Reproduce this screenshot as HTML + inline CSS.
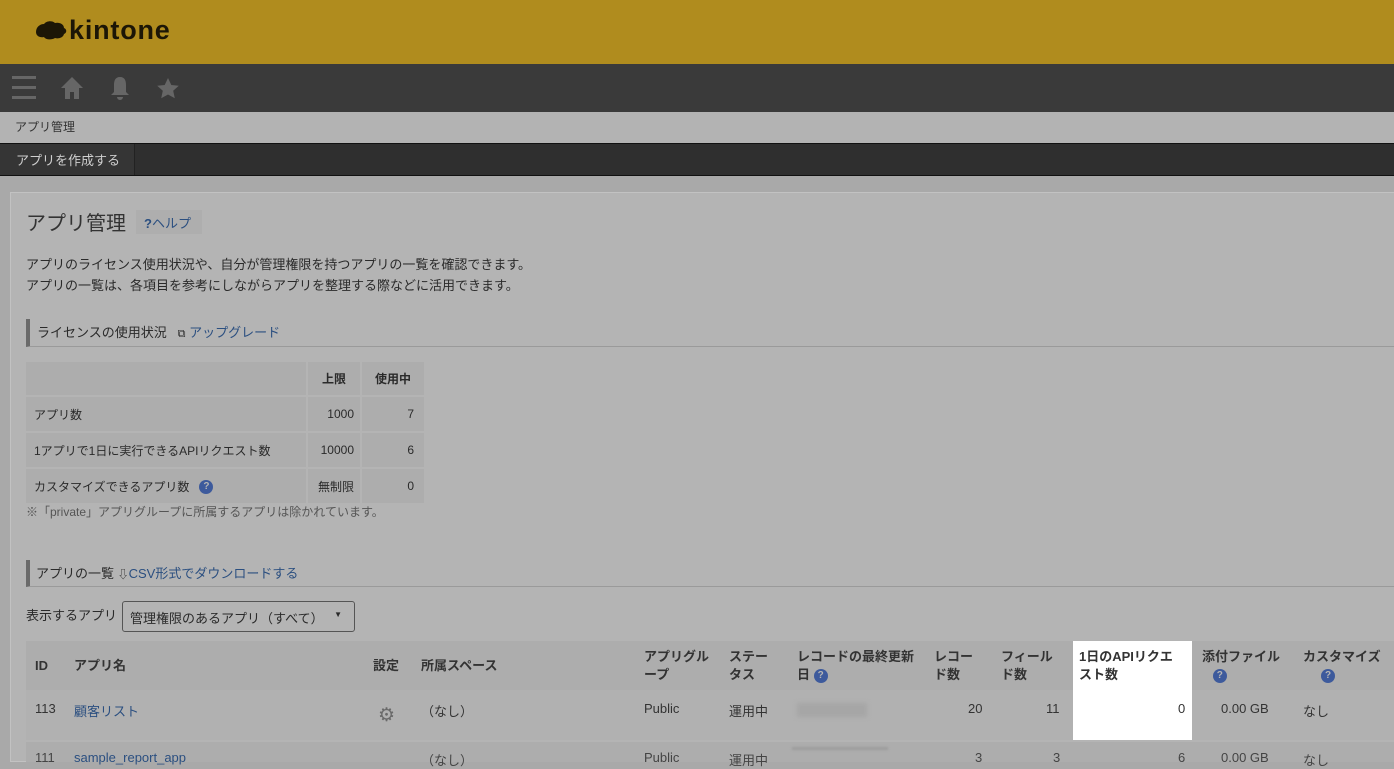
<!DOCTYPE html><html><head><meta charset="utf-8"><style>
*{box-sizing:border-box;margin:0;padding:0}
body{width:1394px;height:758px;overflow:hidden;background:#a9a9a9;font-family:"Liberation Sans","Noto Sans CJK JP",sans-serif;color:#2a2a2a;font-size:13px;position:relative}
.a{position:absolute;white-space:nowrap}
.link{color:#2b4f80}
td,th{font-size:13px}
.q{display:inline-block;width:14px;height:14px;border-radius:50%;background:#3d5a9c;color:#b5b5b5;font-size:10px;font-weight:bold;text-align:center;line-height:14px;vertical-align:middle}
.w{white-space:normal}
</style></head><body>
<div class="a" style="left:0;top:0;width:1394px;height:64px;background:#b08c1e"></div>
<svg class="a" style="left:34px;top:19px" width="34" height="26" viewBox="0 0 34 24"><path d="M2 12c0-5 4-8 8-8 2-3 8-4 11-1 4-1 9 1 9 5 3 1 3 5 0 6-1 4-6 5-9 4-3 2-9 2-11-1-4 1-8-1-8-5z" fill="#1c1606"/></svg>
<div class="a" style="left:69px;top:15px;font-size:27px;font-weight:bold;color:#1c1606;letter-spacing:.8px">kintone</div>
<div class="a" style="left:0;top:64px;width:1394px;height:48px;background:#3a3a3a"></div>
<div class="a" style="left:12px;top:76px;width:24px;height:3px;background:#666;box-shadow:0 10px 0 #666,0 20px 0 #666"></div>
<svg class="a" style="left:60px;top:76px" width="24" height="24"><path d="M12 1L1 12h4v11h5v-7h4v7h5V12h4z" fill="#666"/></svg>
<svg class="a" style="left:109px;top:75px" width="22" height="26"><path d="M11 2c-5 0-6 4-6 8v7l-3 3h18l-3-3v-7c0-4-1-8-6-8zM8 22a3 3 0 006 0z" fill="#666"/></svg>
<svg class="a" style="left:156px;top:77px" width="24" height="23"><path d="M12 1l3.3 7 7.5.8-5.6 5 1.6 7.5L12 17.5 5.2 21.3l1.6-7.5-5.6-5 7.5-.8z" fill="#666"/></svg>
<div class="a" style="left:0;top:112px;width:1394px;height:31px;background:#b3b3b3"></div>
<div class="a" style="left:15px;top:118px;font-size:12px;color:#333">アプリ管理</div>
<div class="a" style="left:0;top:143px;width:1394px;height:33px;background:#2f2f2f;border-top:1px solid #111;border-bottom:1px solid #111"></div>
<div class="a" style="left:0;top:144px;width:135px;height:31px;border-right:1px solid #222;background:#353535;color:#cfcfcf;font-size:13px;padding:6px 0 0 16px">アプリを作成する</div>
<div class="a" style="left:10px;top:192px;width:1390px;height:570px;background:#b4b4b4;border:1px solid #c2c2c2;border-right:none"></div>
<div class="a" style="left:26px;top:207px;font-size:20px;color:#333">アプリ管理</div>
<div class="a" style="left:136px;top:210px;width:66px;height:24px;background:#aeaeae;color:#2b4f80;font-size:13px;padding:3px 0 0 8px"><b>?</b>ヘルプ</div>
<div class="a" style="left:26px;top:254px;line-height:21px;color:#2a2a2a">アプリのライセンス使用状況や、自分が管理権限を持つアプリの一覧を確認できます。<br>アプリの一覧は、各項目を参考にしながらアプリを整理する際などに活用できます。</div>
<div class="a" style="left:26px;top:319px;width:1368px;height:28px;border-left:4px solid #6a6a6a;border-bottom:1px solid #9a9a9a;padding:3px 0 0 7px">ライセンスの使用状況 &nbsp;&nbsp;<span style="font-size:11px">⧉</span> <span class="link">アップグレード</span></div>
<table class="a" style="left:26px;top:362px;border-collapse:separate;border-spacing:2px;margin:-2px">
<tr style="height:33px"><td style="width:280px;background:#adadad"></td><td style="width:52px;background:#adadad;font-weight:bold;font-size:12px;text-align:center">上限</td><td style="width:62px;background:#adadad;font-weight:bold;font-size:12px;text-align:center">使用中</td></tr>
<tr style="height:34px"><td style="background:#adadad;padding-left:8px;font-size:12px">アプリ数</td><td style="background:#adadad;text-align:right;padding-right:6px;font-size:12px">1000</td><td style="background:#adadad;text-align:right;padding-right:10px;font-size:12px">7</td></tr>
<tr style="height:34px"><td style="background:#adadad;padding-left:8px;font-size:12px">1アプリで1日に実行できるAPIリクエスト数</td><td style="background:#adadad;text-align:right;padding-right:6px;font-size:12px">10000</td><td style="background:#adadad;text-align:right;padding-right:10px;font-size:12px">6</td></tr>
<tr style="height:34px"><td style="background:#adadad;padding-left:8px;font-size:12px">カスタマイズできるアプリ数 &nbsp;&nbsp;<span class="q">?</span></td><td style="background:#adadad;text-align:right;padding-right:6px;font-size:12px">無制限</td><td style="background:#adadad;text-align:right;padding-right:10px;font-size:12px">0</td></tr>
</table>
<div class="a" style="left:26px;top:503px;font-size:12px;color:#555">※「private」アプリグループに所属するアプリは除かれています。</div>
<div class="a" style="left:26px;top:560px;width:1368px;height:27px;border-left:4px solid #6a6a6a;border-bottom:1px solid #9a9a9a;padding:3px 0 0 6px">アプリの一覧 <span style="font-size:11px">⇩</span><span class="link">CSV形式でダウンロードする</span></div>
<div class="a" style="left:26px;top:605px">表示するアプリ</div>
<div class="a" style="left:122px;top:601px;width:233px;height:31px;border:1px solid #555;border-radius:3px;padding:6px 0 0 7px">管理権限のあるアプリ（すべて） <span style="position:absolute;right:12px;top:8px;font-size:8px">▼</span></div>
<div class="a" style="left:26px;top:641px;width:1368px;height:49px;background:#adadad"></div>
<div class="a" style="left:26px;top:690px;width:1368px;height:50px;background:#b1b1b1"></div>
<div class="a" style="left:26px;top:742px;width:1368px;height:20px;background:#adadad"></div>
<div class="a" style="left:1073px;top:641px;width:119px;height:99px;background:#fff"></div>
<div class="a" style="top:648px;left:0;font-size:13px;line-height:18px;font-weight:bold;color:#333">
<span class="a" style="left:35px;top:9px">ID</span>
<span class="a" style="left:74px;top:9px">アプリ名</span>
<span class="a" style="left:373px;top:9px">設定</span>
<span class="a" style="left:421px;top:9px">所属スペース</span>
<span class="a w" style="left:644px;top:0;width:72px">アプリグループ</span>
<span class="a w" style="left:729px;top:0;width:46px">ステータス</span>
<span class="a w" style="left:797px;top:0;width:124px">レコードの最終更新日 <span class="q">?</span></span>
<span class="a w" style="left:934px;top:0;width:46px">レコード数</span>
<span class="a w" style="left:1001px;top:0;width:60px">フィールド数</span>
<span class="a w" style="left:1079px;top:0;width:106px">1日のAPIリクエスト数</span>
<span class="a" style="left:1202px;top:0">添付ファイル<br>&nbsp;&nbsp;&nbsp;<span class="q">?</span></span>
<span class="a" style="left:1303px;top:0">カスタマイズ<br>&nbsp;&nbsp;&nbsp;&nbsp;&nbsp;<span class="q">?</span></span>
</div>
<div class="a" style="top:701px;left:0;font-size:13px;color:#333">
<span class="a" style="left:35px">113</span>
<span class="a link" style="left:74px">顧客リスト</span>
<span class="a" style="left:378px;top:3px;font-size:19px;color:#6a6a6a">⚙</span>
<span class="a" style="left:421px">（なし）</span>
<span class="a" style="left:644px">Public</span>
<span class="a" style="left:729px">運用中</span>
<span class="a" style="left:797px;top:2px;width:70px;height:14px;background:#a6a6a6;filter:blur(2px)"></span>
<span class="a" style="left:968px">20</span>
<span class="a" style="left:1046px">11</span>
<span class="a" style="left:1178px">0</span>
<span class="a" style="left:1221px">0.00 GB</span>
<span class="a" style="left:1303px">なし</span>
</div>
<div class="a" style="top:750px;left:0;font-size:13px;color:#444">
<span class="a" style="left:35px">111</span>
<span class="a link" style="left:74px">sample_report_app</span>
<span class="a" style="left:421px">（なし）</span>
<span class="a" style="left:644px">Public</span>
<span class="a" style="left:729px">運用中</span>
<span class="a" style="left:792px;top:-3px;width:96px;height:3px;background:#9c9c9c;filter:blur(1px)"></span>
<span class="a" style="left:975px">3</span>
<span class="a" style="left:1053px">3</span>
<span class="a" style="left:1178px">6</span>
<span class="a" style="left:1221px">0.00 GB</span>
<span class="a" style="left:1303px">なし</span>
</div>
</body></html>
